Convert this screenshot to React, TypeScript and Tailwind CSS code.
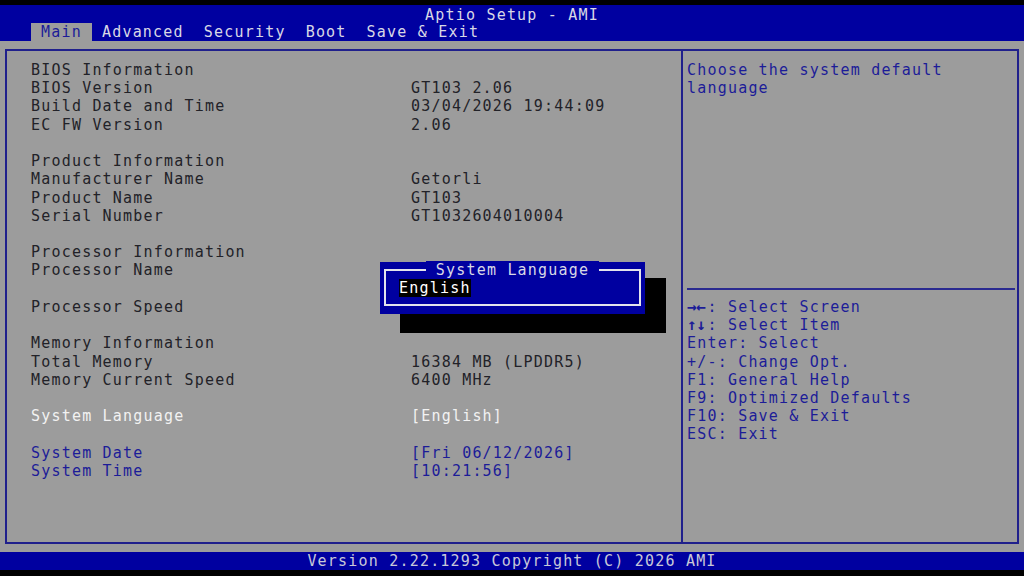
import React from 'react';

type Row = { label?: string; value?: string; tone?: 'info' | 'blue' | 'white' };

const ROWS: Row[] = [
  { label: 'BIOS Information', tone: 'info' },
  { label: 'BIOS Version', value: 'GT103 2.06', tone: 'info' },
  { label: 'Build Date and Time', value: '03/04/2026 19:44:09', tone: 'info' },
  { label: 'EC FW Version', value: '2.06', tone: 'info' },
  {},
  { label: 'Product Information', tone: 'info' },
  { label: 'Manufacturer Name', value: 'Getorli', tone: 'info' },
  { label: 'Product Name', value: 'GT103', tone: 'info' },
  { label: 'Serial Number', value: 'GT1032604010004', tone: 'info' },
  {},
  { label: 'Processor Information', tone: 'info' },
  { label: 'Processor Name', tone: 'info' },
  {},
  { label: 'Processor Speed', tone: 'info' },
  {},
  { label: 'Memory Information', tone: 'info' },
  { label: 'Total Memory', value: '16384 MB (LPDDR5)', tone: 'info' },
  { label: 'Memory Current Speed', value: '6400 MHz', tone: 'info' },
  {},
  { label: 'System Language', value: '[English]', tone: 'white' },
  {},
  { label: 'System Date', value: '[Fri 06/12/2026]', tone: 'blue' },
  { label: 'System Time', value: '[10:21:56]', tone: 'blue' },
];

// [key glyphs drawn bold, rest]
const LEGEND: [string, string][] = [
  ['→←', ': Select Screen'],
  ['↑↓', ': Select Item'],
  ['', 'Enter: Select'],
  ['', '+/-: Change Opt.'],
  ['', 'F1: General Help'],
  ['', 'F9: Optimized Defaults'],
  ['', 'F10: Save & Exit'],
  ['', 'ESC: Exit'],
];

const TABS = ['Main', 'Advanced', 'Security', 'Boot', 'Save & Exit'];

const toneClass = (tone?: Row['tone']) =>
  tone === 'blue' ? 'text-[#1c1c98]' : tone === 'white' ? 'text-[#f2f2f2]' : 'text-[#222228]';

export default function App() {
  return (
    <div
      className="relative w-[1024px] h-[576px] overflow-hidden bg-black flex flex-col text-[15px] tracking-[1.2px] whitespace-pre"
      style={{ fontFamily: '"DejaVu Sans Mono", "Liberation Mono", monospace' }}
    >
      <div className="h-[5px] shrink-0" />

      {/* header */}
      <div className="h-[36px] shrink-0 bg-[#0000a0] text-[#d8d8e6] flex flex-col">
        <div className="h-[18px] leading-[20px] text-center">Aptio Setup - AMI</div>
        <div className="h-[18px] flex pl-[31px]">
          {TABS.map((tab, i) => (
            <div
              key={tab}
              className={`px-[10px] leading-[18px] ${i === 0 ? 'bg-[#9c9c9c] text-[#1c1c98]' : ''}`}
            >
              {tab}
            </div>
          ))}
        </div>
      </div>

      {/* body */}
      <div className="flex-1 bg-[#9c9c9c] pt-[8px] pb-[8px] px-[5px] flex">
        <div className="flex-1 flex border-2 border-[#20208c]">
          <div className="w-[674px] pl-[24px] pt-[10px] flex flex-col">
            {ROWS.map((row, i) => (
              <div key={i} className={`h-[18.23px] leading-[18.23px] flex ${toneClass(row.tone)}`}>
                <div className="w-[380px]">{row.label ?? ''}</div>
                <div>{row.value ?? ''}</div>
              </div>
            ))}
          </div>
          <div className="flex-1 border-l-2 border-[#20208c] pl-[4px] pr-[2px] pt-[10px] flex flex-col text-[#1c1c98]">
            <div className="h-[18.23px] leading-[18.23px]">Choose the system default</div>
            <div className="h-[18.23px] leading-[18.23px]">language</div>
            <div className="h-[182.3px]" />
            <div className="h-[18.23px] flex items-center">
              <div className="flex-1 border-t-2 border-[#2a2a90]" />
            </div>
            {LEGEND.map(([keys, rest]) => (
              <div key={rest} className="h-[18.23px] leading-[18.23px] flex items-center">
                {keys && (
                  <span className="w-[20.5px] overflow-hidden text-[16px] leading-[18px] font-bold tracking-[-0.5px]">
                    {keys}
                  </span>
                )}
                <span>{rest}</span>
              </div>
            ))}
          </div>
        </div>
      </div>

      {/* footer */}
      <div className="h-[18px] shrink-0 bg-[#0000a0] text-[#c8c8d8] leading-[18px] text-center">
        Version 2.22.1293 Copyright (C) 2026 AMI
      </div>
      <div className="h-[6px] shrink-0" />

      {/* popup shadow */}
      <div className="absolute left-[400px] top-[278px] w-[266px] h-[55px] bg-black" />
      {/* popup */}
      <div className="absolute left-[380px] top-[262px] w-[265px] h-[52px] bg-[#0000a0] pl-[4px] pr-[4px] pt-[7px] pb-[8px]">
        <div className="relative h-full border-2 border-[#e4e4ec]">
          <div className="absolute left-0 right-0 -top-[10px] flex justify-center">
            <div className="bg-[#0000a0] px-[10px] h-[18px] leading-[18px] text-[#d8d8e6]">System Language</div>
          </div>
          <div className="absolute left-[13px] top-[8px] bg-black text-white h-[18px] leading-[18px]">English</div>
        </div>
      </div>
    </div>
  );
}
